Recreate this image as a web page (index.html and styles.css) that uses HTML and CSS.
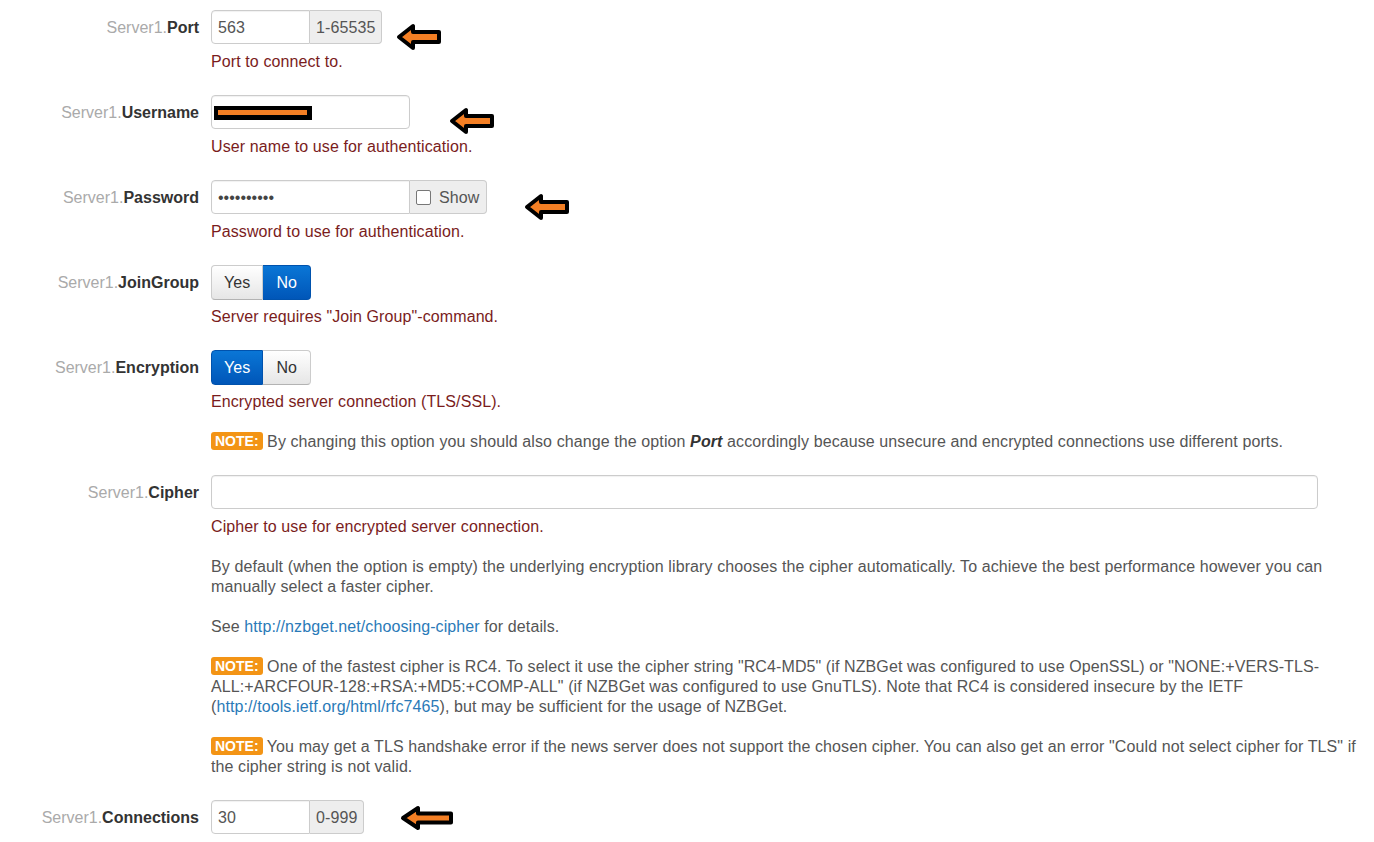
FILE: index.html
```html
<!DOCTYPE html>
<html>
<head>
<meta charset="utf-8">
<title>Server settings</title>
<link rel="stylesheet" href="styles.css">
</head>
<body>
<div class="form">

  <div class="row">
    <div class="label"><span class="prefix">Server1.</span><b>Port</b></div>
    <div class="controls">
      <div class="line">
        <div class="group">
          <div class="input w-small">563</div>
          <span class="addon">1-65535</span>
        </div>
        <svg class="arrow arrow-port" width="46" height="28" viewBox="0 0 46 28"><path d="M3 14 L17 3 L17 9 L43 9 L43 19 L17 19 L17 25 Z" fill="#f47f24" stroke="#000" stroke-width="4" stroke-linejoin="round"/></svg>
      </div>
      <div class="help"><p class="desc">Port to connect to.</p></div>
    </div>
  </div>

  <div class="row">
    <div class="label"><span class="prefix">Server1.</span><b>Username</b></div>
    <div class="controls">
      <div class="line">
        <div class="input w-med"><span class="redact"><span class="redact-line"></span></span></div>
        <svg class="arrow arrow-user" width="46" height="28" viewBox="0 0 46 28"><path d="M3 14 L17 3 L17 9 L43 9 L43 19 L17 19 L17 25 Z" fill="#f47f24" stroke="#000" stroke-width="4" stroke-linejoin="round"/></svg>
      </div>
      <div class="help"><p class="desc">User name to use for authentication.</p></div>
    </div>
  </div>

  <div class="row">
    <div class="label"><span class="prefix">Server1.</span><b>Password</b></div>
    <div class="controls">
      <div class="line">
        <div class="group">
          <div class="input w-med pw">••••••••••</div>
          <span class="addon addon-show"><span class="checkbox"></span>Show</span>
        </div>
        <svg class="arrow arrow-pass" width="46" height="28" viewBox="0 0 46 28"><path d="M3 14 L17 3 L17 9 L43 9 L43 19 L17 19 L17 25 Z" fill="#f47f24" stroke="#000" stroke-width="4" stroke-linejoin="round"/></svg>
      </div>
      <div class="help"><p class="desc">Password to use for authentication.</p></div>
    </div>
  </div>

  <div class="row">
    <div class="label"><span class="prefix">Server1.</span><b>JoinGroup</b></div>
    <div class="controls">
      <div class="line">
        <div class="btn-group">
          <span class="btn btn-left">Yes</span><span class="btn btn-right active">No</span>
        </div>
      </div>
      <div class="help"><p class="desc">Server requires "Join Group"-command.</p></div>
    </div>
  </div>

  <div class="row">
    <div class="label"><span class="prefix">Server1.</span><b>Encryption</b></div>
    <div class="controls">
      <div class="line">
        <div class="btn-group">
          <span class="btn btn-left active">Yes</span><span class="btn btn-right">No</span>
        </div>
      </div>
      <div class="help">
        <p class="desc">Encrypted server connection (TLS/SSL).</p>
        <p><span class="note">NOTE:</span> By changing this option you should also change the option <b><i>Port</i></b> accordingly because unsecure and encrypted connections use different ports.</p>
      </div>
    </div>
  </div>

  <div class="row">
    <div class="label"><span class="prefix">Server1.</span><b>Cipher</b></div>
    <div class="controls">
      <div class="line">
        <div class="input w-xxl"></div>
      </div>
      <div class="help">
        <p class="desc">Cipher to use for encrypted server connection.</p>
        <p>By default (when the option is empty) the underlying encryption library chooses the cipher automatically. To achieve the best performance however you can manually select a faster cipher.</p>
        <p>See <a href="#">http://nzbget.net/choosing-cipher</a> for details.</p>
        <p><span class="note">NOTE:</span> One of the fastest cipher is RC4. To select it use the cipher string "RC4-MD5" (if NZBGet was configured to use OpenSSL) or "NONE:+VERS-TLS-ALL:+ARCFOUR-128:+RSA:+MD5:+COMP-ALL" (if NZBGet was configured to use GnuTLS). Note that RC4 is considered insecure by the IETF (<a href="#">http://tools.ietf.org/html/rfc7465</a>), but may be sufficient for the usage of NZBGet.</p>
        <p><span class="note">NOTE:</span> You may get a TLS handshake error if the news server does not support the chosen cipher. You can also get an error "Could not select cipher for TLS" if the cipher string is not valid.</p>
      </div>
    </div>
  </div>

  <div class="row">
    <div class="label"><span class="prefix">Server1.</span><b>Connections</b></div>
    <div class="controls">
      <div class="line">
        <div class="group">
          <div class="input w-small">30</div>
          <span class="addon">0-999</span>
        </div>
        <svg class="arrow arrow-conn" width="54" height="26" viewBox="0 0 54 26"><path d="M3 13 L18 3 L18 8.5 L51 8.5 L51 17.5 L18 17.5 L18 23 Z" fill="#f47f24" stroke="#000" stroke-width="4" stroke-linejoin="round"/></svg>
      </div>
    </div>
  </div>

</div>
</body>
</html>
```

FILE: styles.css
```css
html, body {
  margin: 0;
  padding: 0;
  background: #fff;
}

body {
  font-family: "Liberation Sans", Arial, sans-serif;
  font-size: 16px;
  line-height: 20px;
  color: #555;
  letter-spacing: 0.1px;
}

.form {
  padding: 10px 6px 0 0;
}

.row {
  display: grid;
  grid-template-columns: 199px 1fr;
  column-gap: 12px;
  margin-bottom: 23px;
}

.label {
  text-align: right;
  line-height: 35px;
  color: #333;
  white-space: nowrap;
  letter-spacing: 0;
}

.label .prefix {
  color: #aaa;
}

.label b {
  font-weight: bold;
  color: #333;
}

.line {
  display: flex;
  align-items: flex-start;
  height: 34px;
}

.group {
  display: flex;
}

.input {
  box-sizing: border-box;
  height: 34px;
  border: 1px solid #ccc;
  border-radius: 4px;
  padding: 0 6px;
  line-height: 33px;
  color: #555;
  background: #fff;
  box-shadow: inset 0 1px 1px rgba(0, 0, 0, 0.06);
  white-space: nowrap;
  overflow: hidden;
}

.w-small { width: 99px; }
.w-med { width: 199px; }
.w-xxl { width: 1107px; }

.group .input {
  border-top-right-radius: 0;
  border-bottom-right-radius: 0;
}

.addon {
  box-sizing: border-box;
  height: 34px;
  line-height: 33px;
  padding: 0 6px;
  border: 1px solid #ccc;
  border-left: 0;
  border-radius: 0 4px 4px 0;
  background: #eee;
  color: #555;
  white-space: nowrap;
}

.addon-show {
  display: flex;
  align-items: center;
  padding: 0 7px 0 6px;
}

.checkbox {
  display: inline-block;
  width: 15px;
  height: 15px;
  box-sizing: border-box;
  border: 1px solid #777;
  border-radius: 2px;
  background: #fff;
  margin-right: 8px;
}

.pw {
  font-size: 16px;
  letter-spacing: 0;
  color: #444;
}

.redact {
  display: inline-block;
  vertical-align: top;
  margin-top: 10px;
  margin-left: -4px;
  width: 98px;
  height: 14px;
  background: #000;
  position: relative;
}

.redact-line {
  position: absolute;
  left: 4px;
  right: 5px;
  top: 4px;
  height: 5px;
  background: #f47f24;
}

.btn-group {
  display: flex;
}

.btn {
  box-sizing: border-box;
  height: 35px;
  line-height: 33px;
  padding: 0 12px;
  border: 1px solid #ccc;
  border-bottom-color: #b3b3b3;
  background: linear-gradient(#ffffff, #e6e6e6);
  color: #333;
}

.btn-left {
  border-radius: 4px 0 0 4px;
}

.btn-right {
  border-left: 0;
  border-radius: 0 4px 4px 0;
  padding: 0 13px;
}

.btn.active {
  background: linear-gradient(#0a76d6, #0056b8);
  border-color: #0052ad;
  color: #fff;
}

.arrow {
  flex: none;
  display: block;
}

.arrow-port { margin: 13px 0 0 14px; }
.arrow-user { margin: 12px 0 0 39px; }
.arrow-pass { margin: 13px 0 0 37px; }
.arrow-conn { margin: 5px 0 0 36px; }

.help {
  margin-top: 8px;
}

.help p {
  margin: 0 0 20px;
}

.help p:last-child {
  margin-bottom: 0;
}

.help p.desc {
  color: #7a1c1c;
}

.help a {
  color: #2a7ab8;
  text-decoration: none;
}

.help b i {
  color: #333;
}

.note {
  display: inline-block;
  vertical-align: 1px;
  padding: 2px 4px 1px;
  font-size: 14px;
  line-height: 15px;
  font-weight: bold;
  color: #fff;
  background: #f39415;
  border-radius: 3px;
  letter-spacing: 0;
}
```
